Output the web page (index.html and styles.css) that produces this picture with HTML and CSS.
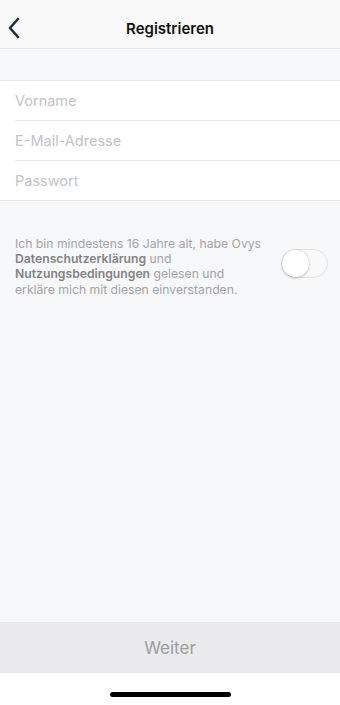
FILE: index.html
```html
<!DOCTYPE html>
<html lang="de">
<head>
<meta charset="utf-8">
<link rel="stylesheet" href="styles.css">
</head>
<body>
<div class="screen">
  <header class="nav">
    <svg class="back" width="14" height="22" viewBox="0 0 14 22"><path d="M11 2 L3 11 L11 20" fill="none" stroke="#1f2a44" stroke-width="2.6" stroke-linecap="round" stroke-linejoin="round"/></svg>
    <h1 class="title">Registrieren</h1>
  </header>
  <div class="band"></div>
  <div class="form">
    <div class="row"><span class="ph">Vorname</span></div>
    <div class="row"><span class="ph">E-Mail-Adresse</span></div>
    <div class="row last"><span class="ph">Passwort</span></div>
  </div>
  <main class="content">
    <div class="consent">
      <p class="text">Ich bin mindestens 16 Jahre alt, habe Ovys<br><b>Datenschutzerklärung</b> und<br><b>Nutzungsbedingungen</b> gelesen und<br>erkläre mich mit diesen einverstanden.</p>
      <div class="toggle"><div class="knob"></div></div>
    </div>
  </main>
  <div class="button">Weiter</div>
  <div class="home"><div class="bar"></div></div>
</div>
</body>
</html>
```
FILE: styles.css
```css
html, body { margin: 0; padding: 0; }
body { font-family: Inter, "Open Sans", "Liberation Sans", sans-serif; background: #fff; }
.screen { width: 340px; height: 705px; display: flex; flex-direction: column; }
.nav { height: 48px; background: #f9f9f9; border-bottom: 1px solid #e4e4e6; position: relative; display: flex; align-items: center; justify-content: center; flex: none; }
.back { position: absolute; left: 7px; top: 17px; }
.title { margin: 0; font-size: 15px; font-weight: 600; color: #111; padding-top: 9px; }
.band { height: 31px; background: #f7f8fa; border-bottom: 1px solid #e8e8ea; flex: none; }
.form { background: #fff; border-bottom: 1px solid #e4e4e6; flex: none; }
.row { height: 39px; margin-left: 15px; border-bottom: 1px solid #e6e6e8; display: flex; align-items: center; }
.row.last { border-bottom: none; height: 39px; }
.ph { color: #c3c3c8; font-size: 14.5px; }
.content { flex: 1; background: #f7f8fa; }
.consent { display: flex; align-items: center; padding: 35px 12px 0 15px; justify-content: space-between; }
.text { margin: 0; width: 260px; font-size: 12.2px; line-height: 15.2px; color: #a3a3a6; white-space: nowrap; }
.text b { color: #838386; font-weight: 600; }
.toggle { width: 45px; height: 27px; border: 1px solid #e2e2e4; border-radius: 15px; background: #f9f9fa; position: relative; flex: none; margin-top: -6px; }
.knob { position: absolute; left: 0; top: 0; width: 27px; height: 27px; border-radius: 50%; background: #fff; box-shadow: 0 1px 3px rgba(0,0,0,0.22), 0 0 0 0.5px rgba(0,0,0,0.06); }
.button { height: 51px; background: #eaeaec; color: #9c9ca0; font-size: 17px; display: flex; align-items: center; justify-content: center; flex: none; }
.home { height: 32px; background: #fff; display: flex; justify-content: center; flex: none; }
.bar { width: 121px; height: 5px; border-radius: 3px; background: #000; margin-top: 19px; }
```
